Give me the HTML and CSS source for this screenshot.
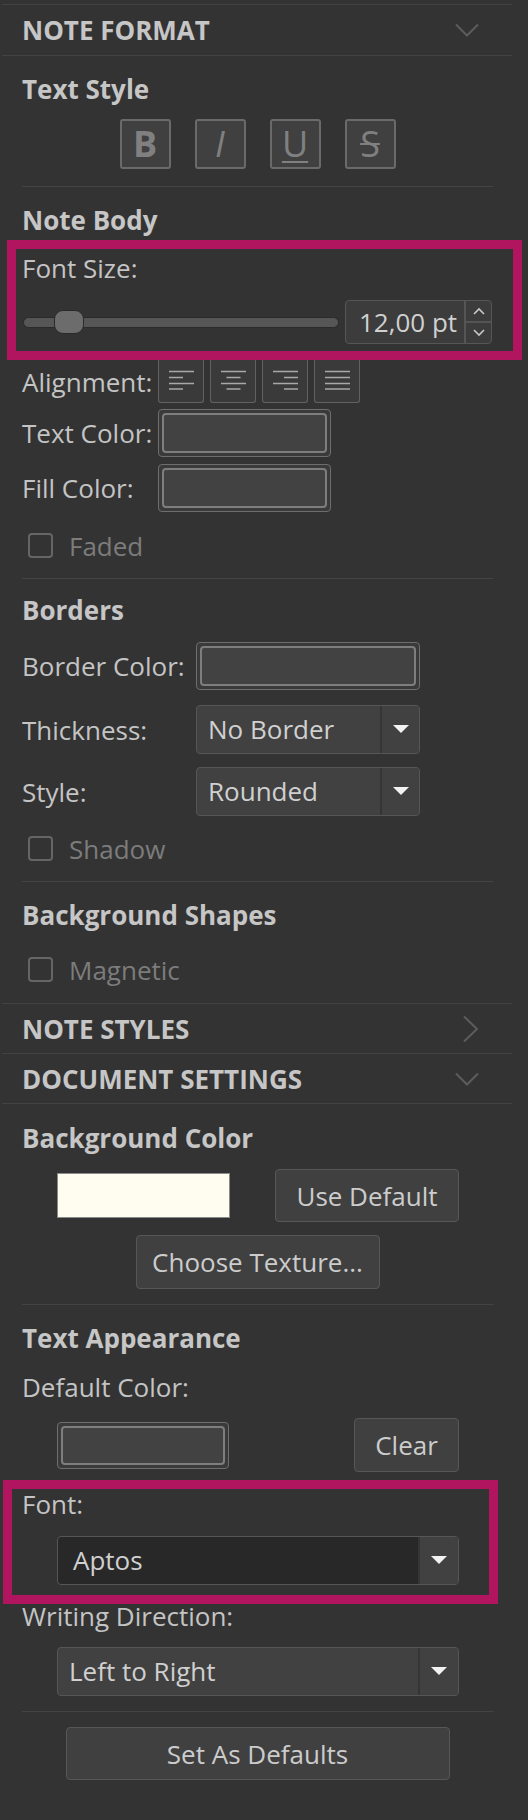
FILE: index.html
```html
<!DOCTYPE html>
<html>
<head>
<meta charset="utf-8">
<link rel="stylesheet" href="styles.css">
</head>
<body>
<div class="panel">
  <div class="hdr hdr-a">
    <span>NOTE FORMAT</span>
    <svg class="chev" width="24" height="14" viewBox="0 0 24 14"><path d="M1 1.5 L12 12.5 L23 1.5" /></svg>
  </div>

  <div class="sect">
    <div class="title t-style">Text Style</div>
    <div class="fmtrow">
      <div class="fmt"><span class="fb">B</span></div>
      <div class="fmt"><span class="fi">I</span></div>
      <div class="fmt"><span class="fu">U</span></div>
      <div class="fmt"><span class="fs">S</span></div>
    </div>
    <div class="sep sep-a"></div>

    <div class="title t-body">Note Body</div>
    <div class="hl hl-1">
      <div class="lbl">Font Size:</div>
      <div class="sliderrow">
        <div class="slider">
          <div class="track"></div>
          <div class="thumb"></div>
        </div>
        <div class="spin">
          <span class="spinval">12,00 pt</span>
          <div class="spinbtns">
            <div class="sb sb-up"><svg width="12" height="8" viewBox="0 0 12 8"><path d="M1 7 L6 2 L11 7"/></svg></div>
            <div class="sb"><svg width="12" height="8" viewBox="0 0 12 8"><path d="M1 1 L6 6 L11 1"/></svg></div>
          </div>
        </div>
      </div>
    </div>

    <div class="row alignrow">
      <div class="rlbl w1">Alignment:</div>
      <div class="aligns">
        <div class="abtn"><svg width="25" height="20" viewBox="0 0 25 20"><path d="M0 1.5H25M0 7.5H14M0 13.5H25M0 19H14"/></svg></div>
        <div class="abtn"><svg width="25" height="20" viewBox="0 0 25 20"><path d="M0 1.5H25M5.5 7.5H19.5M0 13.5H25M5.5 19H19.5"/></svg></div>
        <div class="abtn"><svg width="25" height="20" viewBox="0 0 25 20"><path d="M0 1.5H25M11 7.5H25M0 13.5H25M11 19H25"/></svg></div>
        <div class="abtn"><svg width="25" height="20" viewBox="0 0 25 20"><path d="M0 1.5H25M0 7.5H25M0 13.5H25M0 19H25"/></svg></div>
      </div>
    </div>
    <div class="row crow crow-1">
      <div class="rlbl w1">Text Color:</div>
      <div class="swatch sw-a"><div class="swin"></div></div>
    </div>
    <div class="row crow crow-2">
      <div class="rlbl w1">Fill Color:</div>
      <div class="swatch sw-a"><div class="swin"></div></div>
    </div>
    <div class="chkrow chk-faded">
      <div class="chk"></div><span>Faded</span>
    </div>
    <div class="sep sep-b"></div>

    <div class="title t-borders">Borders</div>
    <div class="row brow brow-1">
      <div class="rlbl w2">Border Color:</div>
      <div class="swatch sw-b"><div class="swin"></div></div>
    </div>
    <div class="row brow brow-2">
      <div class="rlbl w2">Thickness:</div>
      <div class="combo cb-a">
        <span class="cval">No Border</span>
        <span class="carr"><svg width="16" height="9" viewBox="0 0 16 9"><polygon points="0,0 16,0 8,8"/></svg></span>
      </div>
    </div>
    <div class="row brow brow-3">
      <div class="rlbl w2">Style:</div>
      <div class="combo cb-a">
        <span class="cval">Rounded</span>
        <span class="carr"><svg width="16" height="9" viewBox="0 0 16 9"><polygon points="0,0 16,0 8,8"/></svg></span>
      </div>
    </div>
    <div class="chkrow chk-shadow">
      <div class="chk"></div><span>Shadow</span>
    </div>
    <div class="sep sep-c"></div>

    <div class="title t-shapes">Background Shapes</div>
    <div class="chkrow chk-mag">
      <div class="chk"></div><span>Magnetic</span>
    </div>
  </div>

  <div class="hdr hdr-b">
    <span>NOTE STYLES</span>
    <svg class="chev" width="24" height="26" viewBox="0 0 24 26"><path d="M9 0.5 L22 13 L9 25.5" /></svg>
  </div>
  <div class="hdr hdr-c">
    <span>DOCUMENT SETTINGS</span>
    <svg class="chev" width="24" height="14" viewBox="0 0 24 14"><path d="M1 1.5 L12 12.5 L23 1.5" /></svg>
  </div>

  <div class="sect">
    <div class="title t-bg">Background Color</div>
    <div class="pairrow pr-1">
      <div class="bgswatch"></div>
      <div class="btn btn-default">Use Default</div>
    </div>
    <div class="btn btn-texture">Choose Texture...</div>
    <div class="sep sep-d"></div>

    <div class="title t-app">Text Appearance</div>
    <div class="lbl lbl-def">Default Color:</div>
    <div class="pairrow pr-2">
      <div class="swatch sw-c"><div class="swin"></div></div>
      <div class="btn btn-clear">Clear</div>
    </div>
    <div class="hl hl-2">
      <div class="lbl">Font:</div>
      <div class="combo cb-font">
        <span class="cval">Aptos</span>
        <span class="carr"><svg width="16" height="9" viewBox="0 0 16 9"><polygon points="0,0 16,0 8,8"/></svg></span>
      </div>
    </div>
    <div class="lbl lbl-dir">Writing Direction:</div>
    <div class="combo cb-dir">
      <span class="cval">Left to Right</span>
      <span class="carr"><svg width="16" height="9" viewBox="0 0 16 9"><polygon points="0,0 16,0 8,8"/></svg></span>
    </div>
    <div class="sep sep-e"></div>
    <div class="btn btn-set">Set As Defaults</div>
  </div>
</div>
</body>
</html>
```
FILE: styles.css
```css
* { box-sizing: border-box; }

body {
  margin: 0;
  background: #333333;
  font-family: "Open Sans", "Noto Sans", sans-serif;
  font-size: 26px;
  line-height: 30px;
  color: #c4c4c4;
}

.panel {
  margin-left: 2px;
  width: 510px;
  padding-top: 4px;
}

/* section headers */
.hdr {
  display: flex;
  align-items: center;
  justify-content: space-between;
  padding: 0 33px 0 20px;
  font-weight: 700;
  color: #c6c6c6;
  border-top: 1px solid #424242;
}
.hdr-a { height: 52px; border-bottom: 1px solid #424242; }
.hdr-b { height: 50px; }
.hdr-c { height: 51px; border-bottom: 1px solid #424242; }

.chev path {
  fill: none;
  stroke: #5c5c5c;
  stroke-width: 2;
}

.sect {
  padding: 0 19px 0 20px;
}

.title {
  font-weight: 700;
  color: #c6c6c6;
}
.t-style { margin-top: 18px; }
.t-body { margin-top: 18px; }
.t-borders { margin-top: 16px; }
.t-shapes { margin-top: 18px; }
.t-bg { margin-top: 19px; }
.t-app { margin-top: 18px; }

.sep {
  height: 1px;
  background: #444444;
}
.sep-a { margin-top: 17px; }
.sep-b { margin-top: 20px; }
.sep-c { margin-top: 20px; }
.sep-d { margin-top: 15px; }
.sep-e { margin-top: 15px; }

/* text style buttons */
.fmtrow {
  margin-top: 15px;
  display: flex;
  justify-content: center;
  gap: 24px;
}
.fmt {
  width: 51px;
  height: 50px;
  border: 2px solid #6a6a6a;
  border-radius: 3px;
  background: #404040;
  display: flex;
  align-items: center;
  justify-content: center;
  color: #808080;
  font-size: 36px;
  line-height: 40px;
}
.fb { font-weight: 700; }
.fi { font-style: italic; font-weight: 400; }
.fu { text-decoration: underline; text-decoration-thickness: 2px; text-underline-offset: 4px; }
.fs { text-decoration: line-through; text-decoration-thickness: 2px; }

/* highlight boxes */
.hl {
  border: 9px solid #b1155f;
}
.hl-1 {
  margin: 5px -29px 0 -15px;
  padding: 4px 21px 7px 6px;
}
.hl-2 {
  margin: 8px -5px 0 -19px;
  padding: 0 30px 10px 10px;
}

.sliderrow {
  margin-top: 17px;
  display: flex;
  align-items: center;
  gap: 6px;
  padding-left: 1px;
}
.slider {
  position: relative;
  width: 316px;
  height: 44px;
  display: flex;
  align-items: center;
}
.track {
  width: 100%;
  height: 11px;
  border-radius: 6px;
  background: #565656;
  border: 1px solid #2a2a2a;
}
.thumb {
  position: absolute;
  left: 31px;
  top: 10px;
  width: 30px;
  height: 24px;
  border-radius: 9px;
  background: #6c6c6c;
  border: 1px solid #2a2a2a;
}
.spin {
  width: 147px;
  height: 44px;
  border: 1px solid #565656;
  border-radius: 4px;
  background: #3c3c3c;
  display: flex;
}
.spinval {
  flex: 1;
  padding-left: 13px;
  line-height: 42px;
  color: #d0d0d0;
}
.spinbtns {
  width: 27px;
  border-left: 2px solid #555555;
  display: flex;
  flex-direction: column;
}
.sb {
  flex: 1;
  display: flex;
  align-items: center;
  justify-content: center;
}
.sb-up { border-bottom: 2px solid #555555; }
.sb path {
  fill: none;
  stroke: #c8c8c8;
  stroke-width: 1.6;
}

/* rows */
.row {
  display: flex;
  align-items: center;
}
.rlbl.w1 { width: 136px; }
.rlbl.w2 { width: 174px; }

.alignrow { height: 43px; }
.aligns {
  display: flex;
  gap: 6px;
}
.abtn {
  width: 46px;
  height: 43px;
  border: 1px solid #626262;
  border-top: none;
  border-radius: 0 0 3px 3px;
  background: #3a3a3a;
  display: flex;
  align-items: center;
  justify-content: center;
  padding-bottom: 2px;
}
.abtn path {
  stroke: #a8a8a8;
  stroke-width: 1.4;
  fill: none;
}

.crow-1 { margin-top: 6px; }
.crow-2 { margin-top: 7px; }

.swatch {
  border: 1px solid #6e6e6e;
  border-radius: 4px;
  padding: 3px;
  background: #3a3a3a;
}
.swin {
  height: 100%;
  border: 2px solid #7e7e7e;
  border-radius: 4px;
  background: #424242;
}
.sw-a { width: 173px; height: 48px; }
.sw-b { width: 224px; height: 48px; }
.sw-c { width: 172px; height: 47px; }

.chkrow {
  height: 25px;
  display: flex;
  align-items: center;
  gap: 16px;
  padding-left: 6px;
  color: #7c7c7c;
}
.chk {
  width: 25px;
  height: 25px;
  border: 2px solid #656565;
  border-radius: 4px;
}
.chk-faded { margin-top: 21px; }
.chk-shadow { margin-top: 20px; }
.chk-mag { margin-top: 27px; margin-bottom: 21px; }

.brow-1 { margin-top: 17px; }
.brow-2 { margin-top: 15px; }
.brow-3 { margin-top: 13px; }

.combo {
  height: 49px;
  border: 1px solid #565656;
  border-radius: 4px;
  background: #414141;
  display: flex;
  overflow: hidden;
}
.cval {
  flex: 1;
  padding-left: 11px;
  line-height: 46px;
  color: #d0d0d0;
}
.carr {
  width: 39px;
  border-left: 2px solid #353535;
  display: flex;
  align-items: center;
  justify-content: center;
  background: #414141;
}
.carr polygon { fill: #f2f2f2; }
.cb-a { width: 224px; }

.cb-font {
  margin: 17px 0 0 35px;
  background: #282828;
}
.cb-font .carr { width: 40px; }
.cb-font .cval { padding-left: 15px; }
.cb-dir {
  margin: 16px 34px 0 35px;
}
.cb-dir .carr { width: 40px; }

/* document settings */
.pairrow {
  display: flex;
  align-items: center;
  justify-content: space-between;
  padding: 0 34px 0 35px;
}
.pr-1 { margin-top: 16px; }
.pr-2 { margin-top: 16px; }
.bgswatch {
  width: 173px;
  height: 45px;
  background: #fffcf0;
  border: 1px solid #8a8a8a;
}
.btn {
  height: 54px;
  border: 1px solid #575757;
  border-radius: 4px;
  background: #404040;
  color: #cccccc;
  display: flex;
  align-items: center;
  justify-content: center;
}
.btn-default { width: 184px; height: 53px; }
.btn-texture { width: 244px; height: 54px; margin: 13px auto 0; }
.btn-clear { width: 105px; }
.btn-set { width: 384px; height: 53px; margin: 15px auto 0; }

.lbl-def { margin-top: 19px; }
.lbl-dir { margin-top: -3px; }
```
